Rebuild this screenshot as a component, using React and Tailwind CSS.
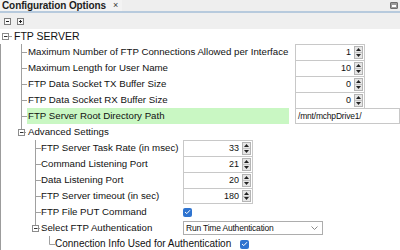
import React from "react";

const LINE = "#a0a0a0";

// tree connector drawn for one row; x values are local to the gutter
const Gutter = ({ w, at, kind = "leaf", last = false, top = true, h = 16 }) => {
  const x = at + 0.5;
  const mid = Math.floor(h / 2) + 0.5;
  return (
    <svg width={w} height={h} className="shrink-0 block">
      {kind === "leaf" && (
        <>
          <line x1={x} y1={0} x2={x} y2={last ? mid : h} stroke={LINE} />
          <line x1={x} y1={mid} x2={w} y2={mid} stroke={LINE} />
        </>
      )}
      {kind === "box" && (
        <>
          {top && <line x1={x} y1={0} x2={x} y2={mid - 3.5} stroke={LINE} />}
          {!last && <line x1={x} y1={mid + 3.5} x2={x} y2={h} stroke={LINE} />}
          <rect x={x - 3} y={mid - 3} width={6} height={6} fill="#fff" stroke="#8c8c8c" />
          <line x1={x - 1.5} y1={mid} x2={x + 2} y2={mid} stroke="#333" />
          <line x1={x + 3.5} y1={mid} x2={w - 1} y2={mid} stroke={LINE} />
        </>
      )}
    </svg>
  );
};

const Arrows = () => (
  <div className="my-px mr-px flex w-[9px] flex-col border border-[#b4b4b4] bg-[#e6e6e6]">
    <div className="flex flex-1 items-center justify-center border-b border-[#c4c4c4]">
      <svg width="5" height="3"><polygon points="2.5,0 5,3 0,3" fill="#222" /></svg>
    </div>
    <div className="flex flex-1 items-center justify-center">
      <svg width="5" height="3"><polygon points="0,0 5,0 2.5,3" fill="#222" /></svg>
    </div>
  </div>
);

const Spinner = ({ value, last }) => (
  <div className={`flex h-full w-[70px] border-x border-t border-[#c8c8c8] bg-white ${last ? "border-b" : ""}`}>
    <span className="flex-1 pr-[3px] text-right text-[9px] leading-[14px] text-[#111]">{value}</span>
    <Arrows />
  </div>
);

const Check = () => (
  <div className="flex h-[9px] w-[9px] items-center justify-center rounded-[2px] bg-[#2f74d0]">
    <svg width="7" height="6" viewBox="0 0 7 6">
      <polyline points="1,3 2.8,4.6 6,1.2" fill="none" stroke="#fff" strokeWidth="1" />
    </svg>
  </div>
);

const topRows = [
  { label: "Maximum Number of FTP Connections Allowed per Interface", value: "1" },
  { label: "Maximum Length for User Name", value: "10" },
  { label: "FTP Data Socket TX Buffer Size", value: "0" },
  { label: "FTP Data Socket RX Buffer Size", value: "0" },
];

const advRows = [
  { label: "FTP Server Task Rate (in msec)", value: "33" },
  { label: "Command Listening Port", value: "21" },
  { label: "Data Listening Port", value: "20" },
  { label: "FTP Server timeout (in sec)", value: "180" },
];

export default function App() {
  return (
    <div
      className="h-[250px] w-[400px] overflow-hidden bg-white text-[#111]"
      style={{ fontFamily: '"Liberation Sans", Arial, sans-serif' }}
    >
      {/* tab header */}
      <div className="flex h-[11px] items-center bg-[#eeeeee]">
        <div className="flex h-full items-center gap-[7px] bg-[#f3f3f3] pl-[2px] pr-[4px]">
          <span className="text-[10px] font-bold leading-none tracking-[-0.1px] text-[#1d1d1d]">
            Configuration Options
          </span>
          <span className="text-[9px] leading-none text-[#333]">×</span>
        </div>
        <div className="flex-1" />
        <div className="mr-[2px] flex h-[7px] w-[8px] items-end rounded-[1px] border border-[#6f6f6f] bg-[#9a9a9a] p-px">
          <div className="h-[2px] w-full bg-white" />
        </div>
      </div>
      <div className="h-[2px] bg-[#b7cadd]" />

      {/* toolbar */}
      <div className="flex h-[16px] items-center gap-[6px] bg-[#efefef] pl-[4px]">
        <div className="flex h-[7px] w-[7px] items-center justify-center border border-[#7d7d7d] bg-[#f8f8f8]">
          <div className="h-px w-[3px] bg-[#222]" />
        </div>
        <div className="relative flex h-[7px] w-[7px] items-center justify-center border border-[#7d7d7d] bg-[#f8f8f8]">
          <div className="h-px w-[3px] bg-[#222]" />
          <div className="absolute h-[3px] w-px bg-[#222]" />
        </div>
      </div>

      {/* root node */}
      <div className="flex h-[15px] items-center">
        <Gutter w={13} at={5} kind="box" top={false} last h={15} />
        <span className="pl-px text-[10.5px] leading-none">FTP SERVER</span>
      </div>

      <div className="border-l border-[#9c9c9c]">
        {topRows.map((r) => (
          <div key={r.label} className="flex h-[16px] items-center">
            <Gutter w={26} at={20} />
            <span className="w-[262px] pl-px text-[9.7px] leading-none">{r.label}</span>
            <div className="ml-[6px] h-full">
              <Spinner value={r.value} />
            </div>
          </div>
        ))}

        <div className="flex h-[16px] items-center">
          <Gutter w={26} at={20} />
          <span className="flex h-full w-[262px] items-center bg-[#c9f7c3] pl-px text-[9.7px] leading-none">
            FTP Server Root Directory Path
          </span>
          <div className="ml-[6px] flex h-full flex-1 items-center border border-[#c8c8c8] bg-white pl-[2px]">
            <span className="text-[8.5px] leading-none tracking-[-0.2px]">/mnt/mchpDrive1/</span>
          </div>
        </div>

        <div className="flex h-[16px] items-center">
          <Gutter w={26} at={20} kind="box" last />
          <span className="pl-px text-[9.7px] leading-none">Advanced Settings</span>
        </div>

        {advRows.map((r, i) => (
          <div key={r.label} className="flex h-[16px] items-center">
            <Gutter w={40} at={34} />
            <span className="w-[142px] text-[9.7px] leading-none">{r.label}</span>
            <div className="h-full">
              <Spinner value={r.value} last={i === advRows.length - 1} />
            </div>
          </div>
        ))}

        <div className="flex h-[16px] items-center">
          <Gutter w={40} at={34} />
          <span className="w-[142px] text-[9.7px] leading-none">FTP File PUT Command</span>
          <Check />
        </div>

        <div className="flex h-[16px] items-center">
          <Gutter w={40} at={34} kind="box" last />
          <span className="w-[142px] text-[9.7px] leading-none">Select FTP Authentication</span>
          <div className="flex h-[14px] w-[140px] items-center justify-between border border-[#adadad] bg-white pl-[2px] pr-[4px]">
            <span className="text-[8.5px] leading-none tracking-[-0.2px]">Run Time Authentication</span>
            <svg width="7" height="4" viewBox="0 0 7 4">
              <polyline points="0.5,0.5 3.5,3.5 6.5,0.5" fill="none" stroke="#8a8a8a" />
            </svg>
          </div>
        </div>

        <div className="flex h-[16px] items-center">
          <Gutter w={54} at={48} last />
          <span className="mr-[9px] text-[10px] leading-none">Connection Info Used for Authentication</span>
          <Check />
        </div>
      </div>
    </div>
  );
}
